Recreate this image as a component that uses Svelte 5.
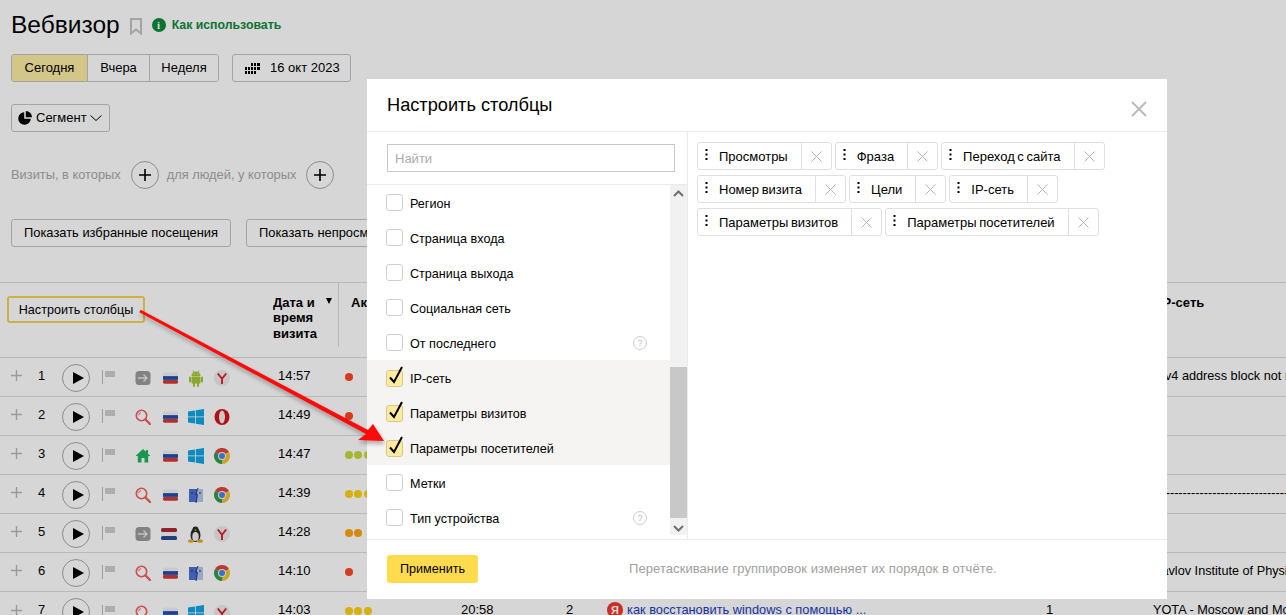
<script lang="ts">
	const rows = [
		{ n: 1, src: 'direct', flag: 'ru', os: 'android', br: 'yandex', time: '14:57', dots: 1, tone: 'red', ip: 'IPv4 address block not managed by the RIPE NCC' },
		{ n: 2, src: 'search', flag: 'ru', os: 'windows', br: 'opera', time: '14:49', dots: 1, tone: 'red', ip: '' },
		{ n: 3, src: 'home', flag: 'ru', os: 'windows', br: 'chrome', time: '14:47', dots: 3, tone: 'lime', ip: '' },
		{ n: 4, src: 'search', flag: 'ru', os: 'mac', br: 'chrome', time: '14:39', dots: 3, tone: 'yellow', ip: '----------------------------------------' },
		{ n: 5, src: 'direct', flag: 'nl', os: 'linux', br: 'yandex', time: '14:28', dots: 2, tone: 'orange', ip: '' },
		{ n: 6, src: 'search', flag: 'ru', os: 'mac', br: 'chrome', time: '14:10', dots: 1, tone: 'red', ip: 'Pavlov Institute of Physiology' },
		{ n: 7, src: 'search', flag: 'ru', os: 'windows', br: 'yandex', time: '14:03', dots: 3, tone: 'yellow', ip: 'YOTA - Moscow and Moscow region', dur: '20:58', views: '2', phrase: 'как восстановить windows с помощью ...', goals: '1' }
	];

	const options = [
		{ label: 'Регион' },
		{ label: 'Страница входа' },
		{ label: 'Страница выхода' },
		{ label: 'Социальная сеть' },
		{ label: 'От последнего', help: true },
		{ label: 'IP-сеть', checked: true },
		{ label: 'Параметры визитов', checked: true },
		{ label: 'Параметры посетителей', checked: true },
		{ label: 'Метки' },
		{ label: 'Тип устройства', help: true }
	];

	const chips = ['Просмотры', 'Фраза', 'Переход с сайта', 'Номер визита', 'Цели', 'IP-сеть', 'Параметры визитов', 'Параметры посетителей'];
</script>

{#snippet icon(name)}
	{#if name === 'direct'}
		<svg width="16" height="16" viewBox="0 0 16 16"><rect x="0.5" y="1" width="15" height="14" rx="3.5" fill="#9b9b9b"/><path d="M3 8h9M8.5 4.500 12 8l-3.500 3.500" fill="none" stroke="#e8e8e8" stroke-width="1.300"/></svg>
	{:else if name === 'search'}
		<svg width="16" height="16" viewBox="0 0 16 16"><circle cx="6.500" cy="6.500" r="5.200" fill="none" stroke="#f0605e" stroke-width="1.600"/><path d="M10.500 10.500 15 15" stroke="#f0605e" stroke-width="2.400" stroke-linecap="round"/><path d="M3.600 6.200A3 3 0 0 1 6 3.600" fill="none" stroke="#f0605e" stroke-width="1"/></svg>
	{:else if name === 'home'}
		<svg width="16" height="16" viewBox="0 0 16 16"><path d="M8 1 0.500 8h2.300v6.500h3.700V10h3v4.500h3.700V8h2.300L13 5.700V2h-2v1.800z" fill="#1fb45c"/></svg>
	{:else if name === 'ru' || name === 'nl'}
		<svg class:ru={name === 'ru'} width="16" height="14" viewBox="0 0 16 14">
			<rect y="1" width="16" height="4" rx="1.500" fill={name === 'ru' ? '#f1f1f1' : '#a92b36'}/>
			<rect y="5" width="16" height="4" fill={name === 'ru' ? '#1f4fb0' : '#f5f5f5'}/>
			<rect y="9" width="16" height="4" rx="1.500" fill={name === 'ru' ? '#d63a36' : '#2c4a92'}/>
		</svg>
	{:else if name === 'android'}
		<svg width="16" height="17" viewBox="0 0 16 17"><g fill="#a4c639"><path d="M3.500 6a4.500 4.500 0 0 1 9 0z"/><rect x="3.500" y="6.600" width="9" height="7" rx="1"/><rect x="1" y="6.600" width="2" height="6" rx="1"/><rect x="13" y="6.600" width="2" height="6" rx="1"/><rect x="5" y="12" width="2" height="5" rx="1"/><rect x="9" y="12" width="2" height="5" rx="1"/></g><path d="M5 0.500 6 2.500M11 0.500 10 2.500" stroke="#a4c639" stroke-width="0.800"/><circle cx="6.300" cy="4" r="0.600" fill="#fff"/><circle cx="9.700" cy="4" r="0.600" fill="#fff"/></svg>
	{:else if name === 'windows'}
		<svg width="16" height="16" viewBox="0 0 16 16"><path d="M0 2.500 7 1.400V7.500H0zM7.800 1.300 16 0V7.500H7.800zM0 8.300H7V14.500L0 13.500zM7.800 8.300H16V16L7.800 14.700z" fill="#12a5e6"/></svg>
	{:else if name === 'mac'}
		<svg width="16" height="15" viewBox="0 0 16 15"><rect x="1" y="1" width="8" height="13" fill="#4f70d6"/><rect x="9" y="1" width="6" height="13" fill="#b6c6ea"/><path d="M10 0 7.500 6.500H9.500L8 15" fill="none" stroke="#2a3a70" stroke-width="1"/><path d="M4 4v2M12 4v2" stroke="#1e2a55" stroke-width="1"/></svg>
	{:else if name === 'linux'}
		<svg width="15" height="17" viewBox="0 0 15 17"><ellipse cx="7.500" cy="9" rx="5" ry="7" fill="#2a2a2a"/><circle cx="7.500" cy="3.500" r="3" fill="#2a2a2a"/><ellipse cx="7.500" cy="10.500" rx="3.200" ry="4.500" fill="#f4f4f4"/><path d="M6.300 4 7.500 3.300 8.700 4 7.500 5z" fill="#e8b020"/><ellipse cx="3" cy="15" rx="3" ry="1.800" fill="#e8b020"/><ellipse cx="12" cy="15" rx="3" ry="1.800" fill="#e8b020"/></svg>
	{:else if name === 'yandex'}
		<svg width="16" height="16" viewBox="0 0 16 16"><circle cx="8" cy="8" r="8" fill="#ececec"/><path d="M3.800 3.500 8 8.800 12.200 3.500M8 8.500V14" fill="none" stroke="#e0202a" stroke-width="1.900"/></svg>
	{:else if name === 'opera'}
		<svg width="16" height="16" viewBox="0 0 16 16"><ellipse cx="8" cy="8" rx="7.500" ry="8" fill="#d2121c"/><ellipse cx="8" cy="8" rx="3" ry="6.500" fill="#efefef"/></svg>
	{:else if name === 'chrome'}
		<svg width="16" height="16" viewBox="0 0 16 16"><path d="M8 8 1.070 4A8 8 0 0 1 14.930 4z" fill="#e0453a"/><path d="M8 8 14.930 4A8 8 0 0 1 8 16z" fill="#f4c430"/><path d="M8 8V16A8 8 0 0 1 1.070 4z" fill="#2f9e4f"/><circle cx="8" cy="8" r="4" fill="#f4f4f4"/><circle cx="8" cy="8" r="3" fill="#4a86e8"/></svg>
	{/if}
{/snippet}

<div class="page">
	<header class="title-row">
		<h1>Вебвизор</h1>
		<svg class="bookmark" width="12" height="17" viewBox="0 0 12 17"><path d="M1 1h10v14.500L6 11.500 1 15.500z" fill="none" stroke="#c4c4c4" stroke-width="2"/></svg>
		<a class="howto">
			<span class="info">i</span>
			Как использовать
		</a>
	</header>

	<div class="period-row">
		<div class="tabs">
			<button class="tab active">Сегодня</button>
			<button class="tab">Вчера</button>
			<button class="tab">Неделя</button>
		</div>
		<button class="btn date">
			<svg class="cal" width="15" height="11" viewBox="0 0 15 11" fill="#000" shape-rendering="crispEdges">
				<rect x="6" y="0" width="2" height="3"/><rect x="9" y="0" width="2" height="3"/><rect x="12" y="0" width="3" height="3"/>
				<rect x="0" y="4" width="2" height="3"/><rect x="3" y="4" width="2" height="3"/><rect x="6" y="4" width="2" height="3"/><rect x="9" y="4" width="2" height="3"/><rect x="12" y="4" width="3" height="3"/>
				<rect x="0" y="8" width="2" height="3"/><rect x="3" y="8" width="2" height="3"/><rect x="6" y="8" width="2" height="3"/><rect x="9" y="8" width="2" height="3"/>
			</svg>
			16 окт 2023
		</button>
	</div>

	<button class="btn segment">
		<svg class="pie" width="14" height="14" viewBox="0 0 14 14"><path d="M6.200 1.200A6.300 6.300 0 1 0 12.800 7.800H6.200z" fill="#000"/><path d="M7.800 0A6.300 6.300 0 0 1 14 6.200H7.800z" fill="#000"/></svg>
		Сегмент
		<svg width="12" height="6" viewBox="0 0 12 6"><path d="M.5.500 6 5.500 11.500.5" fill="none" stroke="#000"/></svg>
	</button>

	<div class="filters">
		<span>Визиты, в которых</span>
		<button class="round" aria-label="Добавить"><svg width="12" height="12" viewBox="0 0 12 12"><path d="M6 0v12M0 6h12" stroke="#000" stroke-width="1.600"/></svg></button>
		<span class="people">для людей, у которых</span>
		<button class="round" aria-label="Добавить"><svg width="12" height="12" viewBox="0 0 12 12"><path d="M6 0v12M0 6h12" stroke="#000" stroke-width="1.600"/></svg></button>
	</div>

	<div class="quick">
		<button class="btn">Показать избранные посещения</button>
		<button class="btn">Показать непросмотренные</button>
	</div>

	<section class="table">
		<div class="thead">
			<div class="setup-cell"><button class="setup">Настроить столбцы</button></div>
			<div class="th date-col">Дата и время визита<span class="sort"></span></div>
			<div class="th act-col">Активность</div>
			<div class="th ip-col">IP-сеть</div>
		</div>
		{#each rows as r}
			<div class="row">
				<svg class="plus" width="11" height="11" viewBox="0 0 11 11"><path d="M5.500 0v11M0 5.500h11" stroke="#b8b8b8" stroke-width="1.400"/></svg>
				<span class="num">{r.n}</span>
				<span class="play"><svg width="12" height="12" viewBox="0 0 12 12"><path d="M1 0 12 6 1 12z" fill="#000"/></svg></span>
				<svg class="flag" width="13" height="14" viewBox="0 0 13 14"><path d="M.5 0v14" stroke="#bdbdbd"/><path d="M3 1h10v6H3z" fill="#cfcfcf"/></svg>
				<div class="icons">
					<span>{@render icon(r.src)}</span>
					<span>{@render icon(r.flag)}</span>
					<span>{@render icon(r.os)}</span>
					<span>{@render icon(r.br)}</span>
				</div>
				<span class="time">{r.time}</span>
				<div class="dots">
					{#each { length: r.dots } as _}
						<i class={r.tone}></i>
					{/each}
				</div>
				<span class="dur">{r.dur ?? ''}</span>
				<span class="views">{r.views ?? ''}</span>
				<span class="phrase">
					{#if r.phrase}
						<b class="ya">Я</b><a>{r.phrase}</a>
					{/if}
				</span>
				<span class="goals">{r.goals ?? ''}</span>
				<span class="ip">{r.ip}</span>
			</div>
		{/each}
	</section>

	<div class="overlay"></div>

	<div class="modal">
		<div class="modal-head">
			<h2>Настроить столбцы</h2>
			<svg class="close" width="16" height="16" viewBox="0 0 16 16"><path d="M1 1l14 14M15 1 1 15" stroke="#b8b8b8" stroke-width="1.800"/></svg>
		</div>
		<div class="modal-body">
			<div class="picker">
				<div class="search"><input placeholder="Найти" /></div>
				<div class="list-wrap">
					<ul class="list">
						{#each options as o}
							<li class:on={o.checked}>
								<span class="box">
									{#if o.checked}
										<svg class="tick" width="17" height="20" viewBox="0 0 17 20"><path d="M3 11.500 7 16 15 1" fill="none" stroke="#000" stroke-width="2"/></svg>
									{/if}
								</span>
								<span class="label">{o.label}</span>
								{#if o.help}<span class="help">?</span>{/if}
							</li>
						{/each}
					</ul>
					<div class="scrollbar">
						<svg class="sb-up" width="11" height="7" viewBox="0 0 11 7"><path d="M1 6 5.500 1.500 10 6" fill="none" stroke="#707070" stroke-width="2"/></svg>
						<div class="thumb"></div>
						<svg class="sb-down" width="11" height="7" viewBox="0 0 11 7"><path d="M1 1 5.500 5.500 10 1" fill="none" stroke="#707070" stroke-width="2"/></svg>
					</div>
				</div>
			</div>
			<div class="chips">
				{#each chips as c}
					<div class="chip">
						<svg class="grip" width="3" height="11" viewBox="0 0 3 11" fill="#000"><rect x=".5" width="2" height="2"/><rect x=".5" y="4.500" width="2" height="2"/><rect x=".5" y="9" width="2" height="2"/></svg>
						<span class="chip-text">{c}</span>
						<span class="chip-x"><svg width="11" height="11" viewBox="0 0 11 11"><path d="M.5.500l10 10M10.500.500l-10 10" stroke="#b5b5b5"/></svg></span>
					</div>
				{/each}
			</div>
		</div>
		<div class="modal-foot">
			<button class="apply">Применить</button>
			<span class="hint">Перетаскивание группировок изменяет их порядок в отчёте.</span>
		</div>
	</div>

	<svg class="arrow" width="400" height="160" viewBox="0 0 400 160">
		<path d="M140.700 14.700 368 135 373 129 384 146 358 145 366 139 139.300 17.300z" fill="#fe0a0a"/>
	</svg>
</div>

<style>
	:global(body) {
		margin: 0;
		background: #fff;
	}

	.page {
		position: relative;
		width: 1286px;
		height: 615px;
		overflow: hidden;
		font: 13px/16px "Liberation Sans", Arial, sans-serif;
		color: #000;
	}

	button {
		font: inherit;
		color: inherit;
		background: #fff;
		cursor: pointer;
		padding: 0;
	}

	.title-row {
		display: flex;
		align-items: center;
		height: 30px;
		padding: 10px 0 0 11px;
	}

	h1 {
		margin: 0;
		font-size: 24.500px;
		font-weight: 400;
		line-height: 30px;
	}

	.bookmark {
		margin: 2px 0 0 10px;
	}

	.howto {
		display: flex;
		align-items: center;
		gap: 6px;
		margin-left: 10px;
		font-weight: 700;
		font-size: 12.300px;
		color: #0f8a3c;
	}

	.info {
		width: 14px;
		height: 14px;
		border-radius: 50%;
		background: #0f8a3c;
		color: #fff;
		font: 700 11px/14px "Liberation Serif", serif;
		text-align: center;
	}

	.period-row {
		display: flex;
		gap: 13px;
		margin: 14px 0 0 11px;
	}

	.tabs {
		display: flex;
		height: 28px;
		border: 1px solid #c4c4c4;
		border-radius: 3px;
		box-sizing: border-box;
		overflow: hidden;
	}

	.tab {
		border: 0;
		border-left: 1px solid #c4c4c4;
		width: 62px;
	}

	.tab:first-child {
		border-left: 0;
		width: 75px;
		background: #fdeba3;
	}

	.tab:last-child {
		width: 69px;
	}

	.btn {
		border: 1px solid #c4c4c4;
		border-radius: 3px;
		height: 28px;
		padding: 0 12px;
		white-space: nowrap;
	}

	.date {
		display: flex;
		align-items: center;
		gap: 10px;
		width: 119px;
	}

	.cal {
		flex: none;
	}

	.segment {
		display: flex;
		align-items: center;
		gap: 3px;
		width: 99px;
		padding: 0 6px;
		margin: 22px 0 0 11px;
	}

	.pie {
		margin-right: 1px;
	}

	.filters {
		display: flex;
		align-items: center;
		margin: 29px 0 0 11px;
		color: #a8a8a8;
		height: 28px;
		font-size: 12.850px;
	}

	.round {
		display: flex;
		align-items: center;
		justify-content: center;
		width: 28px;
		height: 28px;
		border: 1px solid #a8a8a8;
		border-radius: 50%;
		margin-left: 10px;
		background: transparent;
	}

	.people {
		margin-left: 8px;
	}

	.quick {
		display: flex;
		gap: 15px;
		margin: 30px 0 0 11px;
		font-size: 12.900px;
	}

	.quick .btn {
		padding: 0 12px;
	}

	.table {
		margin-top: 35px;
		border-top: 1px solid #ddd;
	}

	.thead {
		display: grid;
		grid-template-columns: 273px 66px 811px 1fr;
		height: 74px;
		border-bottom: 1px solid #ddd;
	}

	.setup-cell {
		padding: 13px 0 0 7px;
	}

	.setup {
		width: 138px;
		height: 27px;
		border: 2px solid #f4d552;
		border-radius: 3px;
		background: #fff;
		font-size: 12.600px;
	}

	.th {
		font-weight: 700;
		line-height: 15.500px;
		padding-top: 11.500px;
		white-space: nowrap;
		overflow: hidden;
	}

	.date-col {
		position: relative;
		white-space: normal;
		border-right: 1px solid #ddd;
		margin-bottom: 10px;
		padding-right: 10px;
	}

	.sort {
		position: absolute;
		right: 6px;
		top: 15px;
		border: 3.500px solid transparent;
		border-top: 6px solid #000;
		border-bottom: 0;
	}

	.act-col {
		padding-left: 12px;
	}

	.ip-col {
		padding-left: 9px;
	}

	.row {
		display: grid;
		grid-template-columns: 32px 30px 28px 45px 138px 72px 110px 105px 40px 440px 110px 1fr;
		align-items: center;
		height: 38px;
		border-bottom: 1px solid #ddd;
		white-space: nowrap;
	}

	.row:last-child {
		height: 39px;
	}

	.plus {
		margin: 0 0 3px 11px;
	}

	.num {
		padding-left: 6px;
		margin-bottom: 3px;
	}

	.play {
		display: flex;
		align-items: center;
		justify-content: center;
		box-sizing: border-box;
		width: 28px;
		height: 28px;
		border: 1px solid #a8a8a8;
		border-radius: 50%;
		padding-left: 3px;
		margin-top: 1px;
	}

	.flag {
		margin-left: 12px;
	}

	.icons {
		display: grid;
		grid-template-columns: repeat(4, 26.300px);
		align-items: center;
		justify-items: start;
		margin-top: 2px;
	}

	.icons span {
		display: flex;
	}

	.icons .ru {
		width: 15px;
		margin-left: 1.500px;
	}

	.time {
		padding-left: 5px;
		margin-bottom: 3px;
	}

	.dots {
		display: flex;
		gap: 1.400px;
		margin-bottom: 1px;
	}

	.dots i {
		width: 8px;
		height: 8px;
		border-radius: 50%;
	}

	.red { background: #ff4626; }
	.lime { background: #c6db39; }
	.yellow { background: #ffd20f; }
	.orange { background: #ffa50c; }

	.dur,
	.views,
	.goals {
		padding-left: 6px;
		margin-bottom: 3px;
	}

	.phrase {
		display: flex;
		align-items: center;
		gap: 4px;
		padding-left: 7px;
		margin-bottom: 3px;
		font-size: 12.800px;
	}

	.phrase a {
		color: #1a3dc1;
	}

	.ya {
		width: 16px;
		height: 16px;
		border-radius: 50%;
		background: #f03a2a;
		color: #fff;
		font-size: 11px;
		line-height: 16px;
		text-align: center;
	}

	.ip {
		padding-left: 3px;
		margin-bottom: 3px;
		font-size: 12.700px;
	}

	.overlay {
		position: absolute;
		inset: 0;
		background: rgba(0, 0, 0, 0.16);
	}

	.modal {
		position: absolute;
		left: 367px;
		top: 79px;
		width: 800px;
		height: 520px;
		display: flex;
		flex-direction: column;
		background: #fff;
	}

	.modal-head {
		display: flex;
		align-items: center;
		justify-content: space-between;
		height: 52px;
		padding: 0 20px;
		border-bottom: 1px solid #ebebeb;
		flex: none;
	}

	h2 {
		margin: 0;
		font-size: 18.200px;
		font-weight: 400;
		line-height: 22px;
	}

	.close {
		margin-top: 8px;
	}

	.modal-body {
		display: flex;
		flex: 1;
		min-height: 0;
	}

	.picker {
		width: 321px;
		border-right: 1px solid #ebebeb;
		box-sizing: border-box;
		display: flex;
		flex-direction: column;
	}

	.search {
		padding: 12px 12px 12px 20px;
		border-bottom: 1px solid #ebebeb;
	}

	.search input {
		display: block;
		box-sizing: border-box;
		width: 288px;
		height: 28px;
		padding: 0 7px;
		border: 1px solid #c8c8c8;
		font: inherit;
		outline: 0;
	}

	.search input::placeholder {
		color: #aaa;
	}

	.list-wrap {
		display: flex;
		height: 350px;
	}

	.list {
		list-style: none;
		margin: 0;
		padding: 0;
		width: 303px;
	}

	.list li {
		display: flex;
		align-items: center;
		height: 35px;
		padding: 0 23px 0 19px;
		box-sizing: border-box;
	}

	.list li.on {
		background: #f5f4f2;
	}

	.box {
		position: relative;
		flex: none;
		width: 17px;
		height: 17px;
		box-sizing: border-box;
		border: 1px solid #cfcfcf;
		border-radius: 3px;
		margin-right: 7px;
		background: #fff;
	}

	.on .box {
		background: #ffeba0;
		border-color: #d8c98a;
		margin-top: 2px;
	}

	.tick {
		position: absolute;
		left: 0;
		top: -5px;
	}

	.label {
		flex: 1;
		font-size: 12.600px;
		padding-top: 2px;
	}

	.help {
		width: 12px;
		height: 12px;
		border: 1px solid #ccc;
		border-radius: 50%;
		color: #bbb;
		font-size: 9px;
		line-height: 12px;
		text-align: center;
		margin-left: -2px;
	}

	.scrollbar {
		position: relative;
		width: 17px;
		background: #f1f1f1;
	}

	.thumb {
		position: absolute;
		left: 0;
		right: 0;
		top: 182px;
		height: 151px;
		background: #c8c8c8;
	}

	.sb-up,
	.sb-down {
		position: absolute;
		left: 3px;
	}

	.sb-up {
		top: 5px;
	}

	.sb-down {
		bottom: 3px;
	}

	.chips {
		display: flex;
		flex-wrap: wrap;
		align-content: flex-start;
		gap: 5px 3px;
		flex: 1;
		padding: 10px 40px 0 9px;
	}

	.chip {
		display: flex;
		align-items: center;
		height: 28px;
		box-sizing: border-box;
		border: 1px solid #dfdfdf;
		border-radius: 3px;
		padding-left: 7px;
		white-space: nowrap;
		word-spacing: -1px;
	}

	.grip {
		flex: none;
		margin-right: 11px;
		margin-top: -3px;
	}

	.chip-text {
		padding: 1px 13px 0 0;
	}

	.chip-x {
		display: flex;
		align-items: center;
		justify-content: center;
		width: 29px;
		height: 100%;
		border-left: 1px solid #dfdfdf;
	}

	.modal-foot {
		display: flex;
		align-items: center;
		flex: none;
		height: 59px;
		border-top: 1px solid #ebebeb;
		padding-left: 20px;
	}

	.apply {
		width: 91px;
		height: 28px;
		border: 0;
		border-radius: 3px;
		background: #ffdb4d;
		font-size: 12.600px;
		margin-top: -2px;
	}

	.hint {
		margin-left: 151px;
		color: #a0a0a0;
		letter-spacing: 0.070px;
		margin-top: -2px;
	}

	.arrow {
		position: absolute;
		left: 0;
		top: 295px;
		filter: drop-shadow(1px 3px 2px rgba(0, 0, 0, 0.3));
	}
</style>
